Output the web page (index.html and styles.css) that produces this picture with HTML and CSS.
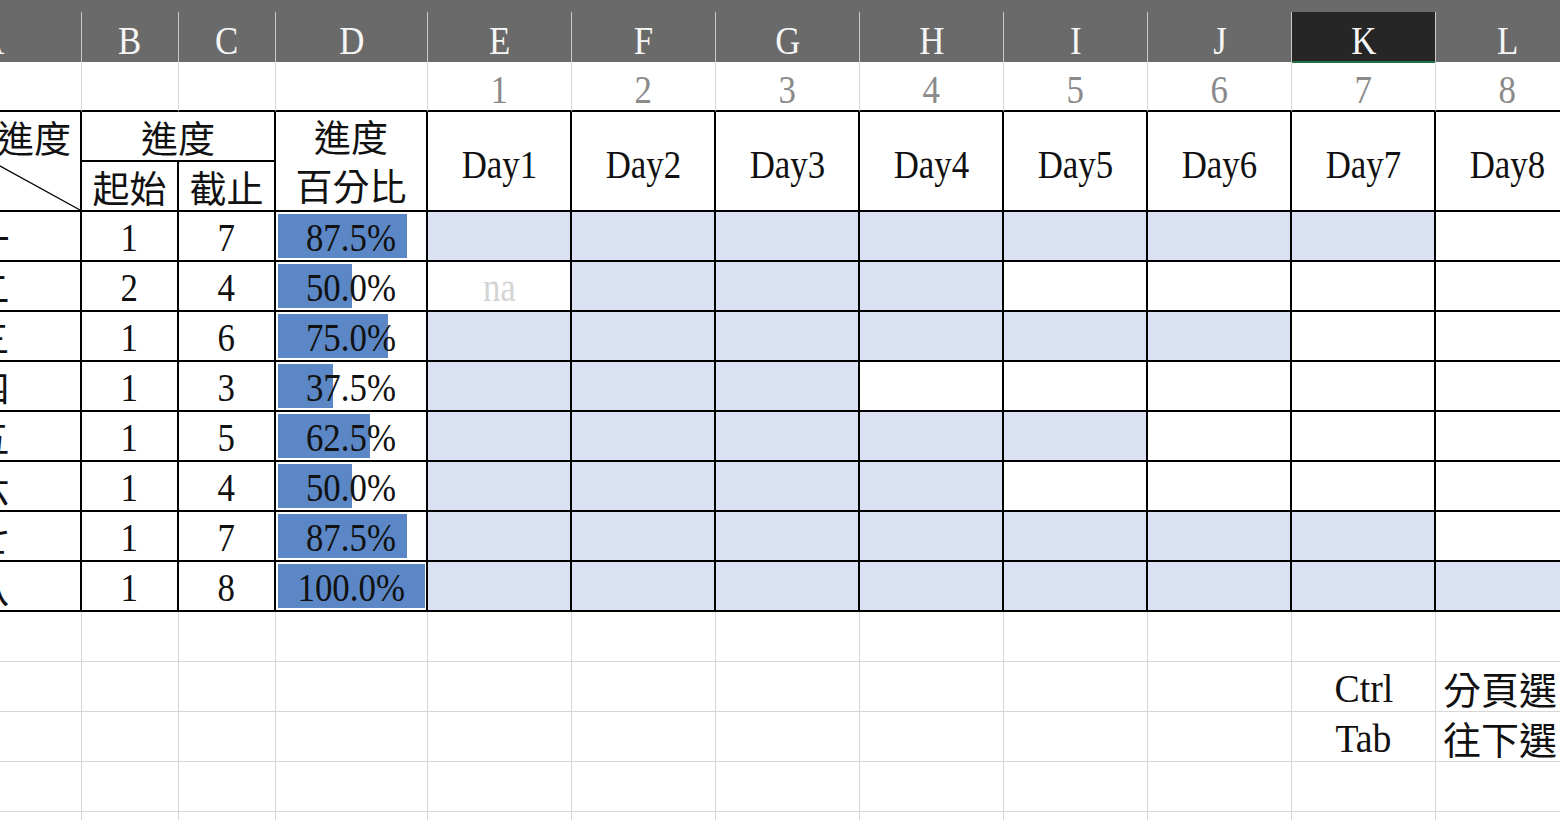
FILE: index.html
```html
<!DOCTYPE html>
<html lang="zh-Hant">
<head>
<meta charset="utf-8">
<title>進度表</title>
<link rel="stylesheet" href="styles.css">
</head>
<body>
<div class="sheet">
  <div class="heads">
    <div class="h"><span class="l">A</span></div>
    <div class="h"><span class="l">B</span></div>
    <div class="h"><span class="l">C</span></div>
    <div class="h"><span class="l">D</span></div>
    <div class="h"><span class="l">E</span></div>
    <div class="h"><span class="l">F</span></div>
    <div class="h"><span class="l">G</span></div>
    <div class="h"><span class="l">H</span></div>
    <div class="h"><span class="l">I</span></div>
    <div class="h"><span class="l">J</span></div>
    <div class="h sel"><span class="l">K</span></div>
    <div class="h"><span class="l">L</span></div>
  </div>
  <div class="grid">
    <!-- row 1 -->
    <div class="c r1"></div><div class="c r1"></div><div class="c r1"></div><div class="c r1"></div>
    <div class="c r1 num"><span class="l g">1</span></div>
    <div class="c r1 num"><span class="l g">2</span></div>
    <div class="c r1 num"><span class="l g">3</span></div>
    <div class="c r1 num"><span class="l g">4</span></div>
    <div class="c r1 num"><span class="l g">5</span></div>
    <div class="c r1 num"><span class="l g">6</span></div>
    <div class="c r1 num"><span class="l g">7</span></div>
    <div class="c r1 num"><span class="l g">8</span></div>

    <!-- header rows -->
    <div class="c t rs2 corner">
      <svg class="diag" viewBox="0 0 100 100" preserveAspectRatio="none"><line x1="0" y1="0" x2="100" y2="100" stroke="#000" stroke-width="1.3" vector-effect="non-scaling-stroke"/></svg>
      <span class="k ctop">進度</span>
      <span class="k cbot">項目</span>
    </div>
    <div class="c t cs2"><span class="k">進度</span></div>
    <div class="c t rs2 two"><span class="k">進度</span><span class="k">百分比</span></div>
    <div class="c t rs2 day"><span class="l">Day1</span></div>
    <div class="c t rs2 day"><span class="l">Day2</span></div>
    <div class="c t rs2 day"><span class="l">Day3</span></div>
    <div class="c t rs2 day"><span class="l">Day4</span></div>
    <div class="c t rs2 day"><span class="l">Day5</span></div>
    <div class="c t rs2 day"><span class="l">Day6</span></div>
    <div class="c t rs2 day"><span class="l">Day7</span></div>
    <div class="c t rs2 day"><span class="l">Day8</span></div>
    <div class="c t"><span class="k">起始</span></div>
    <div class="c t"><span class="k">截止</span></div>

    <!-- 一 -->
    <div class="c t"><span class="k">一</span></div>
    <div class="c t"><span class="l">1</span></div>
    <div class="c t"><span class="l">7</span></div>
    <div class="c t pc"><span class="track"><span class="bar" style="width:87.5%"></span></span><span class="l">87.5%</span></div>
    <div class="c t f"></div><div class="c t f"></div><div class="c t f"></div><div class="c t f"></div><div class="c t f"></div><div class="c t f"></div><div class="c t f"></div><div class="c t"></div>

    <!-- 二 -->
    <div class="c t"><span class="k">二</span></div>
    <div class="c t"><span class="l">2</span></div>
    <div class="c t"><span class="l">4</span></div>
    <div class="c t pc"><span class="track"><span class="bar" style="width:50%"></span></span><span class="l">50.0%</span></div>
    <div class="c t"><span class="l na">na</span></div><div class="c t f"></div><div class="c t f"></div><div class="c t f"></div><div class="c t"></div><div class="c t"></div><div class="c t"></div><div class="c t"></div>

    <!-- 三 -->
    <div class="c t"><span class="k">三</span></div>
    <div class="c t"><span class="l">1</span></div>
    <div class="c t"><span class="l">6</span></div>
    <div class="c t pc"><span class="track"><span class="bar" style="width:75%"></span></span><span class="l">75.0%</span></div>
    <div class="c t f"></div><div class="c t f"></div><div class="c t f"></div><div class="c t f"></div><div class="c t f"></div><div class="c t f"></div><div class="c t"></div><div class="c t"></div>

    <!-- 四 -->
    <div class="c t"><span class="k">四</span></div>
    <div class="c t"><span class="l">1</span></div>
    <div class="c t"><span class="l">3</span></div>
    <div class="c t pc"><span class="track"><span class="bar" style="width:37.5%"></span></span><span class="l">37.5%</span></div>
    <div class="c t f"></div><div class="c t f"></div><div class="c t f"></div><div class="c t"></div><div class="c t"></div><div class="c t"></div><div class="c t"></div><div class="c t"></div>

    <!-- 五 -->
    <div class="c t"><span class="k">五</span></div>
    <div class="c t"><span class="l">1</span></div>
    <div class="c t"><span class="l">5</span></div>
    <div class="c t pc"><span class="track"><span class="bar" style="width:62.5%"></span></span><span class="l">62.5%</span></div>
    <div class="c t f"></div><div class="c t f"></div><div class="c t f"></div><div class="c t f"></div><div class="c t f"></div><div class="c t"></div><div class="c t"></div><div class="c t"></div>

    <!-- 六 -->
    <div class="c t"><span class="k">六</span></div>
    <div class="c t"><span class="l">1</span></div>
    <div class="c t"><span class="l">4</span></div>
    <div class="c t pc"><span class="track"><span class="bar" style="width:50%"></span></span><span class="l">50.0%</span></div>
    <div class="c t f"></div><div class="c t f"></div><div class="c t f"></div><div class="c t f"></div><div class="c t"></div><div class="c t"></div><div class="c t"></div><div class="c t"></div>

    <!-- 七 -->
    <div class="c t"><span class="k">七</span></div>
    <div class="c t"><span class="l">1</span></div>
    <div class="c t"><span class="l">7</span></div>
    <div class="c t pc"><span class="track"><span class="bar" style="width:87.5%"></span></span><span class="l">87.5%</span></div>
    <div class="c t f"></div><div class="c t f"></div><div class="c t f"></div><div class="c t f"></div><div class="c t f"></div><div class="c t f"></div><div class="c t f"></div><div class="c t"></div>

    <!-- 八 -->
    <div class="c t"><span class="k">八</span></div>
    <div class="c t"><span class="l">1</span></div>
    <div class="c t"><span class="l">8</span></div>
    <div class="c t pc"><span class="track"><span class="bar" style="width:100%"></span></span><span class="l">100.0%</span></div>
    <div class="c t f"></div><div class="c t f"></div><div class="c t f"></div><div class="c t f"></div><div class="c t f"></div><div class="c t f"></div><div class="c t f"></div><div class="c t f"></div>

    <!-- empty rows -->
    <div class="c"></div><div class="c"></div><div class="c"></div><div class="c"></div><div class="c"></div><div class="c"></div><div class="c"></div><div class="c"></div><div class="c"></div><div class="c"></div><div class="c"></div><div class="c"></div>

    <div class="c"></div><div class="c"></div><div class="c"></div><div class="c"></div><div class="c"></div><div class="c"></div><div class="c"></div><div class="c"></div><div class="c"></div><div class="c"></div>
    <div class="c"><span class="l wide">Ctrl</span></div>
    <div class="c left"><span class="k">分頁選</span></div>

    <div class="c"></div><div class="c"></div><div class="c"></div><div class="c"></div><div class="c"></div><div class="c"></div><div class="c"></div><div class="c"></div><div class="c"></div><div class="c"></div>
    <div class="c"><span class="l wide">Tab</span></div>
    <div class="c left"><span class="k">往下選</span></div>

    <div class="c"></div><div class="c"></div><div class="c"></div><div class="c"></div><div class="c"></div><div class="c"></div><div class="c"></div><div class="c"></div><div class="c"></div><div class="c"></div><div class="c"></div><div class="c"></div>

    <div class="c"></div><div class="c"></div><div class="c"></div><div class="c"></div><div class="c"></div><div class="c"></div><div class="c"></div><div class="c"></div><div class="c"></div><div class="c"></div><div class="c"></div><div class="c"></div>
  </div>
</div>
</body>
</html>
```

FILE: styles.css
```css
html, body {
  margin: 0;
  padding: 0;
}
body {
  width: 1560px;
  height: 820px;
  overflow: hidden;
  background: #ffffff;
  font-family: "Liberation Serif", "Noto Sans CJK TC", serif;
  color: #111111;
}
.sheet {
  margin-left: -98px;
  width: 1678px;
  height: 820px;
  overflow: hidden;
}
.heads {
  display: grid;
  grid-template-columns: 180px 97px 97px 152px repeat(8, 144px);
  height: 62px;
  padding-top: 12px;
  box-sizing: border-box;
  background: #6a6a6a;
}
.h {
  box-sizing: border-box;
  border-right: 1px solid #c9c9c9;
  color: #f6f6f6;
  display: flex;
  align-items: center;
  justify-content: center;
  padding-top: 6px;
}
.h.sel {
  background: #262626;
  border-bottom: 2px solid #217346;
  padding-top: 8px;
}
.grid {
  display: grid;
  grid-template-columns: 180px 97px 97px 152px repeat(8, 144px);
  grid-auto-rows: 50px;
}
.c {
  box-sizing: border-box;
  position: relative;
  border-right: 1px solid #d6d6d6;
  border-bottom: 1px solid #d6d6d6;
  display: flex;
  align-items: center;
  justify-content: center;
  white-space: nowrap;
  padding-top: 3px;
}
.r1 {
  border-bottom: 2px solid #000;
}
.num {
  padding-top: 6px;
}
.t {
  border-right: 2px solid #000;
  border-bottom: 2px solid #000;
}
.f {
  background: #d9e1f2;
}
.rs2 {
  grid-row: span 2;
}
.cs2 {
  grid-column: span 2;
}
.l {
  display: inline-block;
  font-family: "Liberation Serif", serif;
  font-size: 41px;
  line-height: 1;
  transform: scaleX(0.85);
  position: relative;
}
.l.wide {
  transform: scaleX(0.92);
}
.g {
  color: #8a8a8a;
}
.h .l {
  color: #f6f6f6;
}
.na {
  color: #d4d4d4;
}
.k {
  font-family: "Noto Sans CJK TC", sans-serif;
  font-size: 37px;
  line-height: 1;
  font-weight: 400;
  color: #111;
  position: relative;
}
.left .k {
  font-size: 38px;
}
.two {
  flex-direction: column;
  padding-top: 0;
}
.two .k {
  height: 49px;
  display: flex;
  align-items: center;
}
.day {
  padding-top: 6px;
}
.corner {
  padding-top: 0;
}
.diag {
  position: absolute;
  left: 0;
  top: 0;
  width: 100%;
  height: 100%;
  overflow: visible;
}
.ctop {
  position: absolute;
  right: 9px;
  top: 7px;
}
.cbot {
  position: absolute;
  left: 10px;
  bottom: 8px;
}
.pc {
  padding-top: 3px;
}
.track {
  position: absolute;
  left: 2px;
  top: 2px;
  width: 147px;
  height: 44px;
}
.bar {
  display: block;
  height: 100%;
  background: #5b87c6;
}
.left {
  justify-content: flex-start;
  padding-left: 7px;
}
```
